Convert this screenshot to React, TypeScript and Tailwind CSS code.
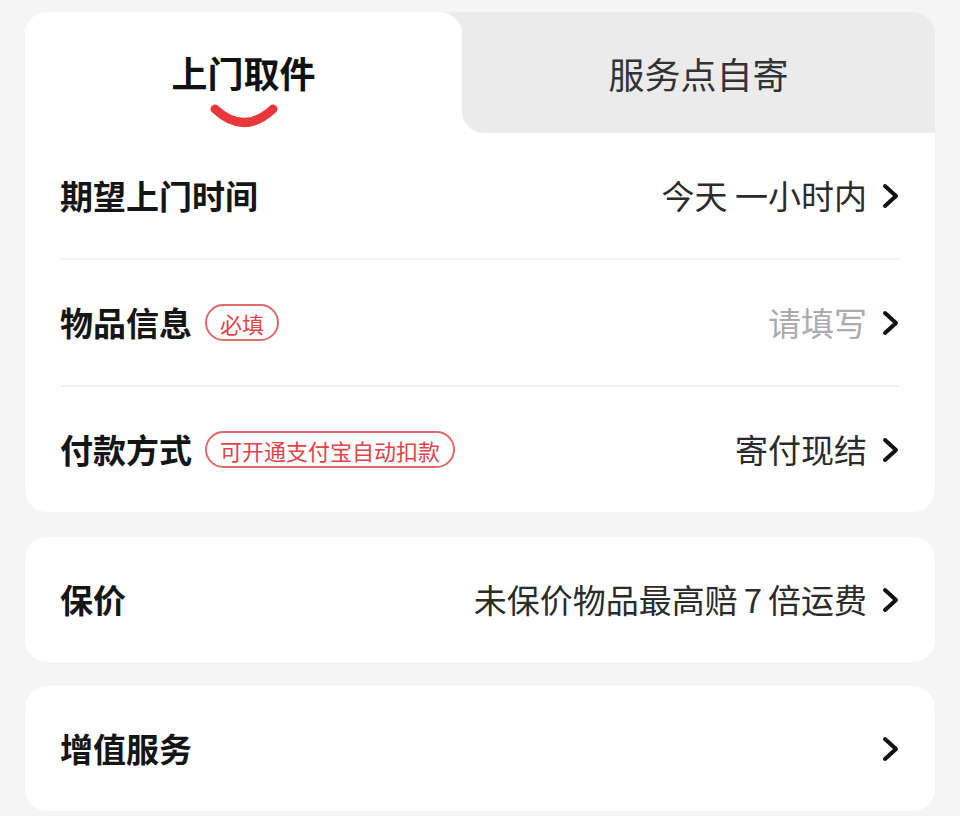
import { ReactNode } from "react";

const Chevron = () => (
  <svg width="18" height="26" viewBox="0 0 18 26" className="shrink-0">
    <polyline
      points="3,3 14,13 3,23"
      fill="none"
      stroke="#111"
      strokeWidth="4"
      strokeLinecap="round"
      strokeLinejoin="round"
    />
  </svg>
);

const Badge = ({ children }: { children: ReactNode }) => (
  <span className="ml-[13px] inline-flex h-[37px] items-center rounded-full border-2 border-[#e06a6a] px-[13px] text-[22px] leading-none text-[#e0434a]">
    {children}
  </span>
);

type RowProps = {
  label: string;
  badge?: string;
  value?: ReactNode;
  muted?: boolean;
};

const Row = ({ label, badge, value, muted }: RowProps) => (
  <div className="flex h-[125px] items-center justify-between px-[35px]">
    <div className="flex items-center">
      <span className="text-[33px] font-semibold leading-none text-[#151515]">{label}</span>
      {badge && <Badge>{badge}</Badge>}
    </div>
    <div className="flex items-center gap-[15px]">
      {value && (
        <span className={`text-[33px] leading-none ${muted ? "text-[#ababab]" : "text-[#2b2b2b]"}`}>
          {value}
        </span>
      )}
      <Chevron />
    </div>
  </div>
);

const Divider = () => <div className="mx-[35px] h-[2px] bg-[#f2f2f2]" />;

const Tabs = () => (
  <div className="flex h-[121px]">
    <div className="flex-1 bg-[#ebebeb]">
      <div className="flex h-full flex-col items-center rounded-tr-[22px] bg-white pt-[42px]">
        <span className="text-[36px] font-bold leading-none text-[#111]">上门取件</span>
        <svg width="70" height="28" viewBox="0 0 70 28" className="mt-[12px]">
          <path
            d="M6 7 Q35 34 64 7"
            fill="none"
            stroke="#e8383b"
            strokeWidth="9"
            strokeLinecap="round"
          />
        </svg>
      </div>
    </div>
    <div className="w-[473px] bg-white">
      <div className="flex h-full items-center justify-center rounded-bl-[22px] bg-[#ebebeb]">
        <span className="text-[36px] leading-none text-[#333]">服务点自寄</span>
      </div>
    </div>
  </div>
);

export default function App() {
  return (
    <div
      className="min-h-[816px] bg-[#f5f5f5] px-[25px] pt-[12px] pb-[8px]"
      style={{ fontFamily: '"Noto Sans CJK SC", "Noto Sans", sans-serif' }}
    >
      <div className="overflow-hidden rounded-[22px] bg-white">
        <Tabs />
        <Row label="期望上门时间" value="今天 一小时内" />
        <Divider />
        <Row label="物品信息" badge="必填" value="请填写" muted />
        <Divider />
        <Row label="付款方式" badge="可开通支付宝自动扣款" value="寄付现结" />
      </div>
      <div className="mt-[25px] overflow-hidden rounded-[22px] bg-white">
        <Row
          label="保价"
          value={
            <>
              未保价物品最高赔<span className="mx-[6px]">7</span>倍运费
            </>
          }
        />
      </div>
      <div className="mt-[24px] overflow-hidden rounded-[22px] bg-white">
        <Row label="增值服务" />
      </div>
    </div>
  );
}
